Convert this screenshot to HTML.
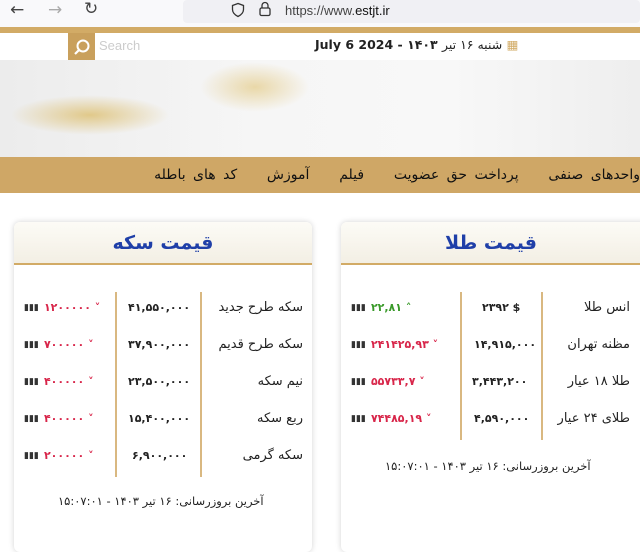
<!DOCTYPE html>
<html><head><meta charset="utf-8"><style>
*{margin:0;padding:0;box-sizing:border-box}
body{width:640px;height:536px;overflow:hidden;background:#fff;font-family:"DejaVu Sans","Liberation Sans",sans-serif;position:relative}
.a{position:absolute;white-space:nowrap;line-height:16px}
.card{position:absolute;background:#fff;border-radius:6px;box-shadow:0 0 6px rgba(0,0,0,.18);overflow:hidden}
.hd{position:absolute;left:0;right:0;top:0;height:43px;background:linear-gradient(#fcfbf6,#f3efe4);border-bottom:2px solid #d2ab66;text-align:center;color:#1f3fa8;font-weight:bold;font-size:19px;line-height:42px}
.vl{position:absolute;width:2px;background:#d9b881}
.lbl{font-size:13px;color:#222;direction:rtl}
.num{font-size:11px;color:#222;font-weight:bold}
.ch{font-size:11px;color:#d8264a;font-weight:bold;vertical-align:top}
.ic{font-size:9px;color:#333;vertical-align:top}
.ft{font-size:11.5px;color:#222;direction:rtl}
</style></head><body>
<div class="a" style="left:0;top:0;width:640px;height:27px;background:#f9f9fb"></div>
<div class="a" style="left:10px;top:2px;font-size:17px;color:#444">←</div>
<div class="a" style="left:48px;top:2px;font-size:17px;color:#aaa">→</div>
<div class="a" style="left:84px;top:1px;font-size:17px;color:#444">↻</div>
<div class="a" style="left:183px;top:0;width:457px;height:23px;background:#f0f0f4;border-radius:4px"></div>
<svg class="a" style="left:230px;top:2px" width="16" height="16" viewBox="0 0 16 16"><path d="M8 1.5L2.5 3.5v4c0 3.5 2.5 5.5 5.5 7 3-1.5 5.5-3.5 5.5-7v-4z" fill="none" stroke="#333" stroke-width="1.3"/></svg>
<svg class="a" style="left:258px;top:1px" width="14" height="16" viewBox="0 0 14 16"><rect x="2" y="7" width="10" height="7.5" rx="1.5" fill="none" stroke="#333" stroke-width="1.3"/><path d="M4 7V4.5a3 3 0 0 1 6 0V7" fill="none" stroke="#333" stroke-width="1.3"/></svg>
<div class="a" style="left:285px;top:3px;font-size:13px;color:#444;font-family:'Liberation Sans',sans-serif">https://www.<span style="color:#111">estjt.ir</span></div>
<div class="a" style="left:0;top:27px;width:640px;height:6px;background:#d2ab66"></div>
<div class="a" style="left:0;top:33px;width:640px;height:27px;background:#fff"></div>
<div class="a" style="left:68px;top:33px;width:27px;height:30px;background:#c9a05c"></div>
<div class="a" style="left:74px;top:62px;width:0;height:0;border-left:7px solid transparent;border-right:7px solid transparent;border-top:8px solid #c9a05c"></div>
<svg class="a" style="left:72px;top:38px" width="20" height="20" viewBox="0 0 20 20"><circle cx="11" cy="8" r="5.5" fill="none" stroke="#fff" stroke-width="2"/><path d="M7 12l-4 4" stroke="#fff" stroke-width="2.2"/></svg>
<div class="a" style="left:99px;top:38px;font-size:13px;color:#ccc;font-family:'Liberation Sans',sans-serif">Search</div>
<div class="a" style="left:315px;top:37px;font-size:12.5px;color:#222;font-weight:bold;direction:ltr">July 6 2024 - ۱۴۰۳ <span style="font-weight:normal">شنبه ۱۶ تیر</span> <span style="color:#d2ab66">▦</span></div>
<div class="a" style="left:0;top:60px;width:640px;height:97px;background:linear-gradient(90deg,#ececec,#f6f6f6 40%,#f8f8f8 70%,#eeeeee)"></div>
<div class="a" style="left:10px;top:95px;width:160px;height:40px;background:radial-gradient(ellipse,rgba(215,175,70,.6),rgba(230,200,120,0) 70%)"></div>
<div class="a" style="left:200px;top:62px;width:110px;height:50px;background:radial-gradient(ellipse,rgba(220,185,90,.5),rgba(230,200,120,0) 70%)"></div>
<div class="a" style="left:0;top:157px;width:640px;height:36px;background:#cfa766"></div>
<div class="a" style="right:0;top:167px;font-size:14px;color:#111;direction:rtl;word-spacing:3px">واحدهای صنفی &nbsp;&nbsp; پرداخت حق عضویت &nbsp;&nbsp; فیلم &nbsp;&nbsp; آموزش &nbsp;&nbsp; کد های باطله</div>

<div class="card" style="left:14px;top:222px;width:298px;height:330px">
<div class="hd">قیمت سکه</div>
<div class="vl" style="left:101px;top:70px;height:185px"></div>
<div class="vl" style="left:186px;top:70px;height:185px"></div>
</div>
<div class="card" style="left:341px;top:222px;width:310px;height:330px">
<div class="hd" style="padding-right:10px">قیمت طلا</div>
<div class="vl" style="left:119px;top:70px;height:148px"></div>
<div class="vl" style="left:200px;top:70px;height:148px"></div>
</div>

<div class="a lbl" style="right:337px;top:300px">سکه طرح جدید</div>
<div class="a lbl" style="right:337px;top:337px">سکه طرح قدیم</div>
<div class="a lbl" style="right:337px;top:374px">نیم سکه</div>
<div class="a lbl" style="right:337px;top:411px">ربع سکه</div>
<div class="a lbl" style="right:337px;top:448px">سکه گرمی</div>
<div class="a num" style="left:128px;top:300px">۴۱,۵۵۰,۰۰۰</div>
<div class="a num" style="left:128px;top:337px">۳۷,۹۰۰,۰۰۰</div>
<div class="a num" style="left:128px;top:374px">۲۳,۵۰۰,۰۰۰</div>
<div class="a num" style="left:128px;top:411px">۱۵,۴۰۰,۰۰۰</div>
<div class="a num" style="left:132px;top:448px">۶,۹۰۰,۰۰۰</div>
<div class="a" style="left:24px;top:300px"><span class="ic">▮▮▮</span> <span class="ch">۱۲۰۰۰۰۰ ˅</span></div>
<div class="a" style="left:24px;top:337px"><span class="ic">▮▮▮</span> <span class="ch">۷۰۰۰۰۰ ˅</span></div>
<div class="a" style="left:24px;top:374px"><span class="ic">▮▮▮</span> <span class="ch">۴۰۰۰۰۰ ˅</span></div>
<div class="a" style="left:24px;top:411px"><span class="ic">▮▮▮</span> <span class="ch">۴۰۰۰۰۰ ˅</span></div>
<div class="a" style="left:24px;top:448px"><span class="ic">▮▮▮</span> <span class="ch">۲۰۰۰۰۰ ˅</span></div>
<div class="a ft" style="left:58px;top:493px">آخرین بروزرسانی: ۱۶ تیر ۱۴۰۳ - ۱۵:۰۷:۰۱</div>

<div class="a lbl" style="right:10px;top:300px">انس طلا</div>
<div class="a lbl" style="right:10px;top:337px">مظنه تهران</div>
<div class="a lbl" style="right:10px;top:374px">طلا ۱۸ عیار</div>
<div class="a lbl" style="right:10px;top:411px">طلای ۲۴ عیار</div>
<div class="a num" style="left:482px;top:300px">۲۳۹۲ $</div>
<div class="a num" style="left:474px;top:337px">۱۴,۹۱۵,۰۰۰</div>
<div class="a num" style="left:472px;top:374px">۳,۴۴۳,۲۰۰</div>
<div class="a num" style="left:474px;top:411px">۴,۵۹۰,۰۰۰</div>
<div class="a" style="left:351px;top:300px"><span class="ic">▮▮▮</span> <span class="ch" style="color:#3a9a2a">۲۲,۸۱ ˄</span></div>
<div class="a" style="left:351px;top:337px"><span class="ic">▮▮▮</span> <span class="ch">۲۴۱۴۲۵,۹۳ ˅</span></div>
<div class="a" style="left:351px;top:374px"><span class="ic">▮▮▮</span> <span class="ch">۵۵۷۳۳,۷ ˅</span></div>
<div class="a" style="left:351px;top:411px"><span class="ic">▮▮▮</span> <span class="ch">۷۴۴۸۵,۱۹ ˅</span></div>
<div class="a ft" style="left:385px;top:458px">آخرین بروزرسانی: ۱۶ تیر ۱۴۰۳ - ۱۵:۰۷:۰۱</div>
</body></html>
